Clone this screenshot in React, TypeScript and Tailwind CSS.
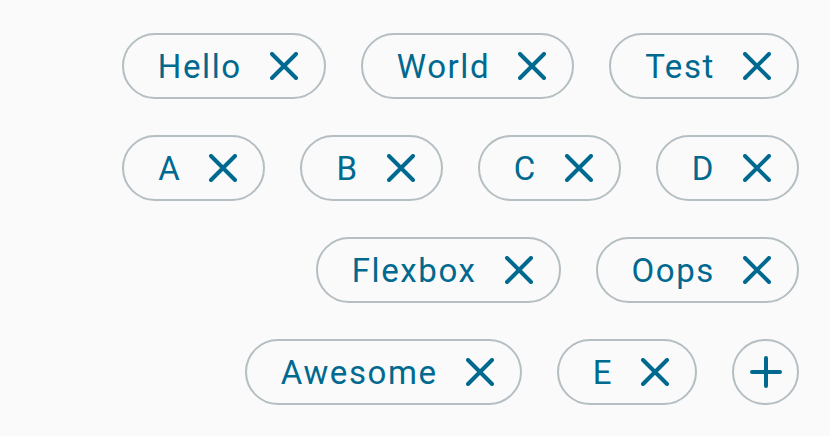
import React from "react";

const tags = ["Hello", "World", "Test", "A", "B", "C", "D", "Flexbox", "Oops", "Awesome", "E"];

function CloseIcon() {
  return (
    <svg width="28" height="28" viewBox="0 0 28 28" fill="none">
      <path d="M2 2 L26 26 M26 2 L2 26" stroke="currentColor" strokeWidth="4" strokeLinecap="round" />
    </svg>
  );
}

function Chip({ label }: { label: string }) {
  return (
    <div className="inline-flex items-center h-[66px] rounded-full border-2 border-[#b5bec2] pl-[34px] pr-[16px] text-[#00698f]">
      <span className="text-[33px] leading-none tracking-[1.6px]">{label}</span>
      <button className="ml-[18px] w-[48px] h-[48px] flex items-center justify-center">
        <CloseIcon />
      </button>
    </div>
  );
}

export default function App() {
  return (
    <div
      className="w-[830px] h-[436px] bg-[#fafafa] overflow-hidden"
      style={{ fontFamily: "Roboto, 'Liberation Sans', sans-serif" }}
    >
      <div className="flex flex-wrap justify-end gap-x-[35px] gap-y-[36px] pt-[33px] pr-[31px] pl-[31px]">
        {tags.map((t) => (
          <Chip key={t} label={t} />
        ))}
        <button className="w-[67px] h-[66px] rounded-full border-2 border-[#b5bec2] flex items-center justify-center text-[#00698f]">
          <svg width="32" height="32" viewBox="0 0 32 32" fill="none">
            <path d="M16 2 V30 M2 16 H30" stroke="currentColor" strokeWidth="4" strokeLinecap="round" />
          </svg>
        </button>
      </div>
    </div>
  );
}
